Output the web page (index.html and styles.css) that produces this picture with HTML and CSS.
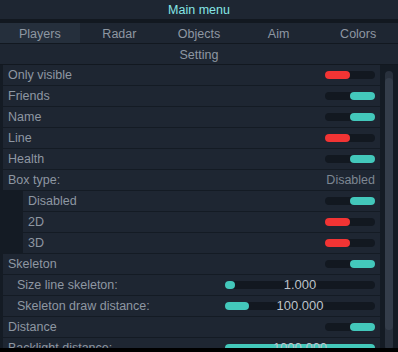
FILE: index.html
```html
<!DOCTYPE html>
<html lang="en">
<head>
    <meta charset="UTF-8">
    <meta name="viewport" content="width=device-width, initial-scale=1.0">
    <title>Main menu</title>
    <link rel="stylesheet" href="styles.css">
</head>
<body>
    <div id="menu">
        <div class="title">Main menu</div>
        <div class="tabs">
            <div class="tab active">Players</div>
            <div class="tab">Radar</div>
            <div class="tab">Objects</div>
            <div class="tab">Aim</div>
            <div class="tab">Colors</div>
        </div>
        <div class="section">Setting</div>

        <div class="list">
            <div class="rows">
                <div class="row"><span>Only visible</span><div class="toggle off"></div></div>
                <div class="row"><span>Friends</span><div class="toggle on"></div></div>
                <div class="row"><span>Name</span><div class="toggle on"></div></div>
                <div class="row"><span>Line</span><div class="toggle off"></div></div>
                <div class="row"><span>Health</span><div class="toggle on"></div></div>
                <div class="row"><span>Box type:</span><span class="value">Disabled</span></div>
                <!-- Box type options -->
                <div class="row sub"><span>Disabled</span><div class="toggle on"></div></div>
                <div class="row sub"><span>2D</span><div class="toggle off"></div></div>
                <div class="row sub"><span>3D</span><div class="toggle off"></div></div>
                <div class="row"><span>Skeleton</span><div class="toggle on"></div></div>
                <div class="row inner">
                    <span>Size line skeleton:</span>
                    <div class="slider"><div class="fill" style="width: 10px"></div><span class="num">1.000</span></div>
                </div>
                <div class="row inner">
                    <span>Skeleton draw distance:</span>
                    <div class="slider"><div class="fill" style="width: 24px"></div><span class="num">100.000</span></div>
                </div>
                <div class="row"><span>Distance</span><div class="toggle on"></div></div>
                <div class="row">
                    <span>Backlight distance:</span>
                    <div class="slider"><div class="fill" style="width: 150px"></div><span class="num">1000.000</span></div>
                </div>
            </div>
            <div class="scroll">
                <div class="thumb"></div>
            </div>
        </div>
    </div>
</body>
</html>
```

FILE: styles.css
```css
body {
    margin: 0;
    background: #000;
    font-family: 'Liberation Sans', Arial, sans-serif;
    font-size: 12.5px;
    color: #8e97a2;
}

#menu {
    width: 398px;
    height: 348px;
    overflow: hidden;
    background: #121820;
    display: flex;
    flex-direction: column;
}

.title {
    height: 18px;
    padding-top: 1px;
    line-height: 19px;
    text-align: center;
    color: #86e6e6;
    background: #1e2632;
    margin-bottom: 4px;
}

.tabs {
    display: flex;
    height: 20px;
    background: #1e2632;
    margin-bottom: 1px;
}

.tab {
    flex: 1;
    text-align: center;
    padding-top: 1px;
    line-height: 20px;
    overflow: hidden;
}

.tab.active {
    background: #252f3c;
}

.section {
    height: 19px;
    padding-top: 1px;
    line-height: 20px;
    text-align: center;
    background: #1e2632;
    margin-bottom: 1px;
}

.list {
    flex: 1;
    display: flex;
    overflow: hidden;
    background: #141b24;
    padding-left: 3px;
}

.rows {
    flex: 1;
    display: flex;
    flex-direction: column;
    gap: 1px;
}

.row {
    flex: none;
    height: 20px;
    display: flex;
    align-items: center;
    justify-content: space-between;
    padding: 0 5px;
    background: #1e2632;
}

.row.sub {
    margin-left: 20px;
}

.row.inner {
    padding-left: 14px;
}

.value {
    color: #7d8792;
}

.toggle {
    width: 50px;
    height: 8px;
    border-radius: 4px;
    background: #121820;
    display: flex;
}

.toggle::before {
    content: "";
    width: 25px;
    border-radius: 4px;
}

.toggle.off::before {
    background: #f23434;
}

.toggle.on {
    justify-content: flex-end;
}

.toggle.on::before {
    background: #43c8bb;
}

/* slider with value centred over it */
.slider {
    position: relative;
    width: 150px;
    height: 8px;
    border-radius: 4px;
    background: #121820;
}

.fill {
    height: 8px;
    border-radius: 4px;
    background: #43c8bb;
}

.num {
    position: absolute;
    left: 0;
    right: 0;
    top: -5px;
    line-height: 18px;
    text-align: center;
    color: #bcc3ca;
    font-size: 13px;
}

.scroll {
    width: 8px;
    height: 272px;
    margin: 6px 5px 0 5px;
    border-radius: 4px;
    background: #29313d;
    padding-top: 7px;
}

.thumb {
    height: 252px;
    border-radius: 4px;
    background: #343d4a;
}
```
